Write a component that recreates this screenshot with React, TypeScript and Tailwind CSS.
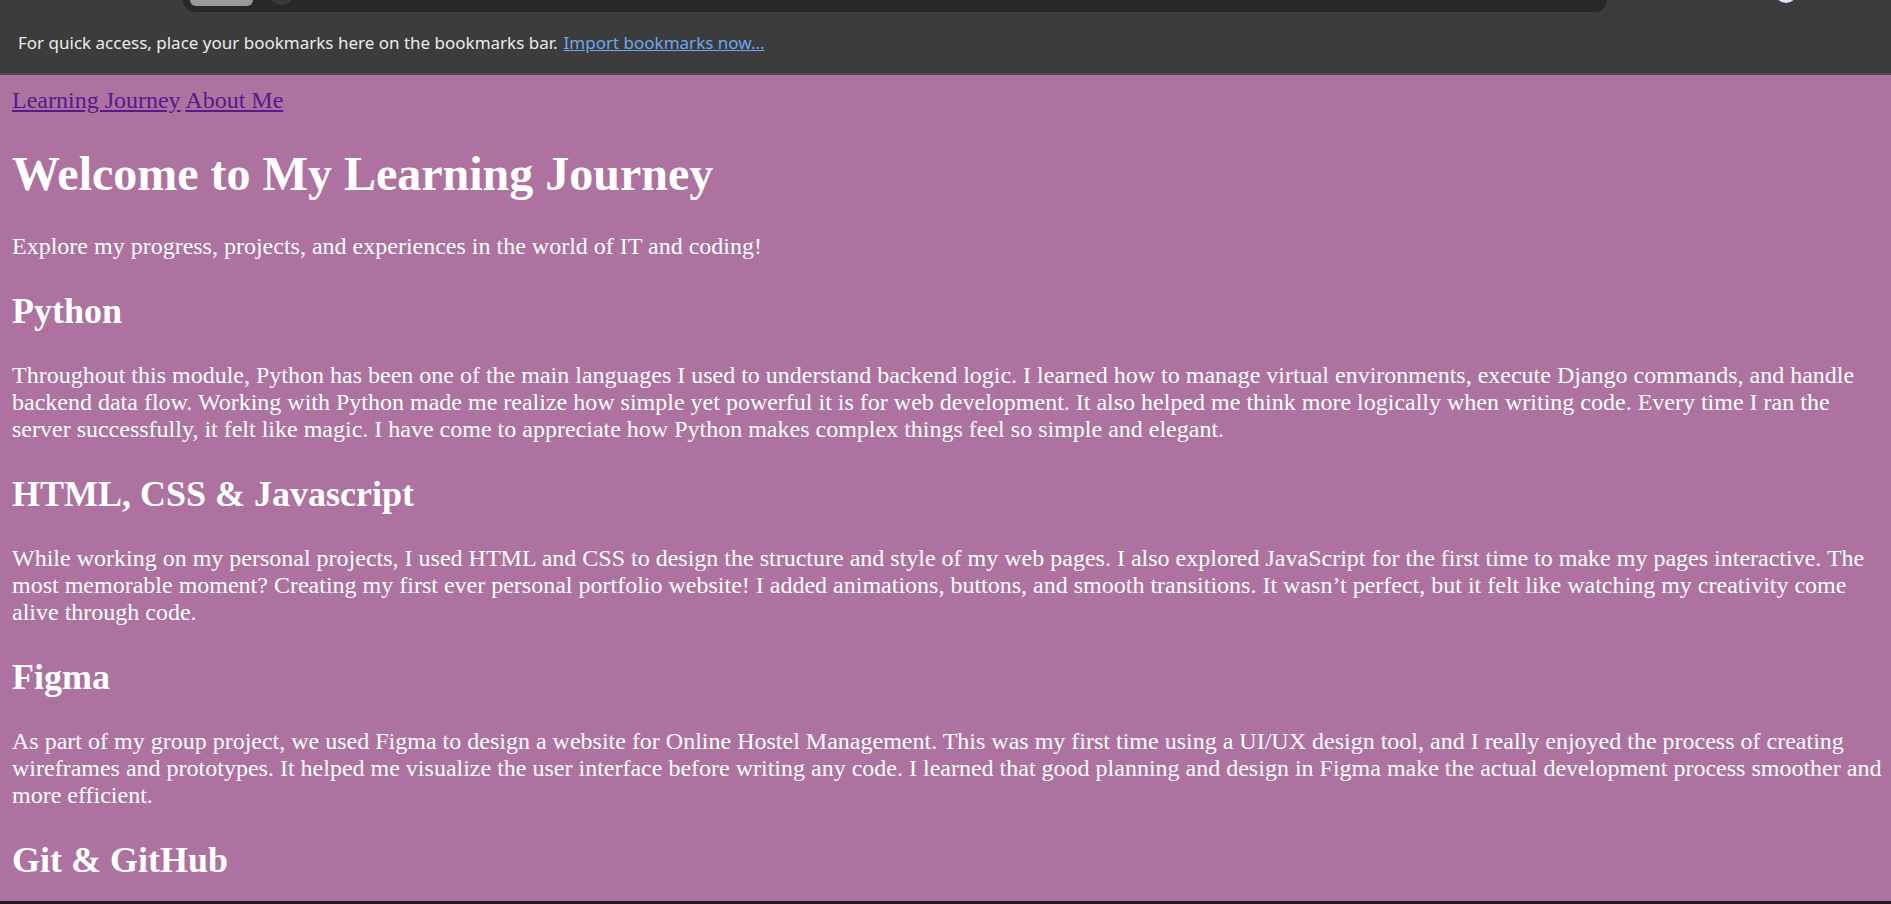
import React from 'react'

/* ------------------------------------------------------------------ */
/*  Content                                                            */
/* ------------------------------------------------------------------ */

const SECTIONS = [
  {
    title: 'Python',
    body:
      'Throughout this module, Python has been one of the main languages I used to understand backend logic. I learned how to manage virtual environments, execute Django commands, and handle backend data flow. Working with Python made me realize how simple yet powerful it is for web development. It also helped me think more logically when writing code. Every time I ran the server successfully, it felt like magic. I have come to appreciate how Python makes complex things feel so simple and elegant.',
  },
  {
    title: 'HTML, CSS & Javascript',
    body:
      'While working on my personal projects, I used HTML and CSS to design the structure and style of my web pages. I also explored JavaScript for the first time to make my pages interactive. The most memorable moment? Creating my first ever personal portfolio website! I added animations, buttons, and smooth transitions. It wasn\u2019t perfect, but it felt like watching my creativity come alive through code.',
  },
  {
    title: 'Figma',
    body:
      'As part of my group project, we used Figma to design a website for Online Hostel Management. This was my first time using a UI/UX design tool, and I really enjoyed the process of creating wireframes and prototypes. It helped me visualize the user interface before writing any code. I learned that good planning and design in Figma make the actual development process smoother and more efficient.',
  },
  {
    title: 'Git & GitHub',
    body:
      'Git and GitHub helped me keep track of every change I made to my projects and share my work with my group.',
  },
]

/* ------------------------------------------------------------------ */
/*  Browser chrome (bookmarks bar)                                     */
/* ------------------------------------------------------------------ */

function BrowserChrome() {
  return (
    <div className="bg-[#3c3c3c] h-[73px] flex flex-col shrink-0 overflow-hidden">
      <div className="flex items-start h-[12px]">
        <div className="ml-[183px] w-[1424px] h-[12px] bg-[#282828] rounded-b-[12px] flex items-start">
          <div className="ml-[7px] w-[63px] h-[6px] bg-[#9a9a9a] rounded-b-[8px]" />
          <div className="ml-[15px] mt-[-22px] w-[27px] h-[27px] bg-[#3a3a3a] rounded-full" />
        </div>
        <div className="ml-[168px] mt-[-19px] w-[22px] h-[22px] bg-[#dbe6fa] rounded-full" />
      </div>
      <div className="flex items-center pl-[18px] h-[37px] mt-[12px] text-[17px] font-['Noto_Sans',sans-serif]">
        <span className="text-[#ececec]">For quick access, place your bookmarks here on the bookmarks bar.</span>
        <a href="#" className="ml-[6px] text-[#6ea6f2] underline">
          Import bookmarks now...
        </a>
      </div>
    </div>
  )
}

/* ------------------------------------------------------------------ */
/*  Page                                                               */
/* ------------------------------------------------------------------ */

export default function App() {
  return (
    <div className="h-[904px] w-full flex flex-col overflow-hidden bg-[#ad72a0]">
      <BrowserChrome />
      <div className="h-[2px] bg-[#4b4b4d] shrink-0" />

      <main className="flex-1 overflow-hidden pl-[12px] pr-[6px] pt-[12px] font-['Liberation_Serif','Times_New_Roman',serif] text-white leading-[normal]">
        <nav className="text-[24px]">
          <a href="#" className="text-[#551a8b] underline">
            Learning Journey
          </a>{' '}
          <a href="#" className="text-[#551a8b] underline">
            About Me
          </a>
        </nav>

        <h1 className="text-[48px] font-bold my-[32px]">Welcome to My Learning Journey</h1>
        <p className="text-[24px] my-[24px]">
          Explore my progress, projects, and experiences in the world of IT and coding!
        </p>

        {SECTIONS.map((s) => (
          <section key={s.title}>
            <h2 className="text-[36px] font-bold my-[30px]">{s.title}</h2>
            <p className="text-[24px] my-[24px]">{s.body}</p>
          </section>
        ))}
      </main>

      <div className="h-[3px] bg-[#1c1c1f] shrink-0" />
    </div>
  )
}
